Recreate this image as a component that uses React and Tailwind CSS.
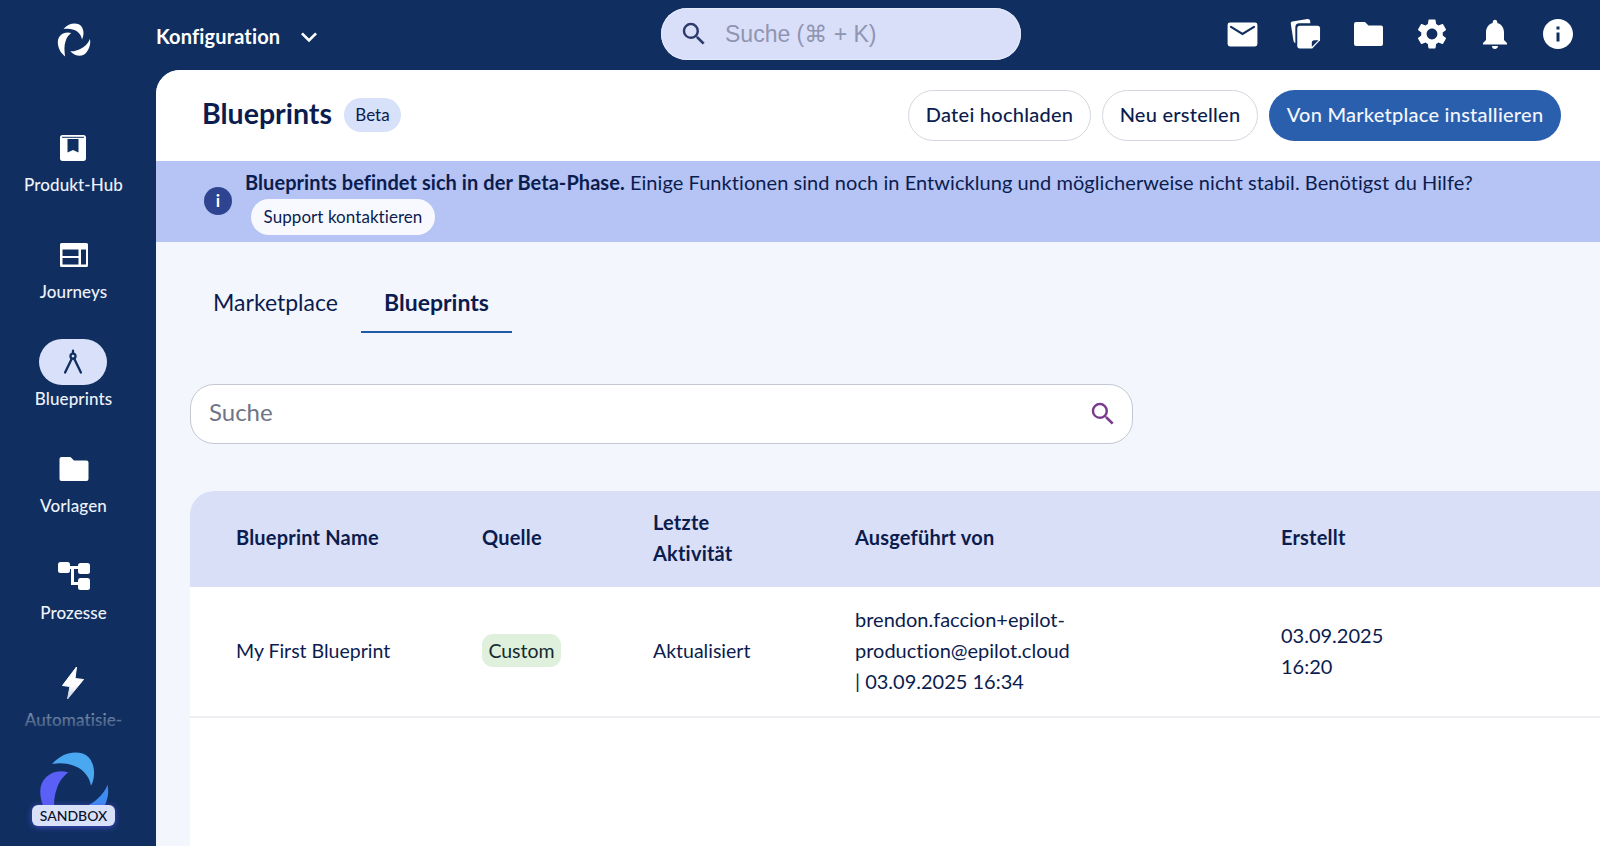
import React from "react";
import { MdSettings, MdNotifications, MdInfo, MdSearch, MdKeyboardArrowDown } from "react-icons/md";

const Crescents = ({ fills, className }) => (
  <svg viewBox="-20 -20 40 40" className={className}>
    <path fill={fills[0]} d="M-8.8,-11.2 C-4.5,-16 1,-17.5 5.5,-16 C11,-14 12,-6 9.3,-1 C8.500,-6 5,-9.300 1,-10.500 C-2,-11.500 -5,-11.800 -8.8,-11.2Z" />
    <path fill={fills[1]} d="M-1.2,-7.2 C-8.500,-9.500 -14,-4.500 -14.300,1 C-14.500,7 -11.500,12.500 -7.200,15.500 C-8,10.500 -8.300,5 -6.800,1 C-5.800,-2.500 -4,-5.300 -1.200,-7.200Z" />
    <path fill={fills[2]} d="M-2.200,10.500 C3,15.800 9.500,16.500 13.500,11.800 C16.500,8 18,3 17,-1.500 C15.500,2.500 12,6 8,8 C5,9.500 1.500,10.800 -2.200,10.500Z" />
  </svg>
);

const BookIcon = () => (
  <svg viewBox="0 0 28 28" className="w-[28px] h-[28px]" fill="white">
    <path fillRule="evenodd" d="M1 3.500C1 2 2 1 3.500 1h21C26 1 27 2 27 3.500V24.500C27 26 26 27 24.500 27h-21C2 27 1 26 1 24.500ZM8.500 5v13.500l5.500-2.600 5.500 2.600V5Z" />
    <rect x="3" y="2.800" width="22" height="1" fill="#102f60" />
  </svg>
);
const JourneyIcon = () => (
  <svg viewBox="0 0 30 26" className="w-[30px] h-[26px]" fill="white">
    <path fillRule="evenodd" d="M2.500 1h25A1.500 1.500 0 0 1 29 2.500v21a1.500 1.500 0 0 1-1.500 1.500h-25A1.500 1.500 0 0 1 1 23.500v-21A1.500 1.500 0 0 1 2.500 1ZM3.500 7.500v6.500h16V7.500Zm18.500 0v15h5v-15ZM3.500 16v6.500h16V16Z" />
  </svg>
);
const CompassIcon = () => (
  <svg viewBox="0 0 24 30" className="w-[20px] h-[26px]" fill="none" stroke="#102f60" strokeWidth="2.800" strokeLinecap="round">
    <circle cx="12" cy="8" r="3" />
    <path d="M12 1.500v2.500M10.500 11 2.500 27.500M13.500 11 21.500 27.500" />
  </svg>
);
const FolderIcon = ({ cls }) => (
  <svg viewBox="0 0 30 26" className={cls} fill="white">
    <path d="M2.500 1h9l3.500 3.500h12.500A2 2 0 0 1 29.500 6.500V23a2 2 0 0 1-2 2h-25a2 2 0 0 1-2-2V3a2 2 0 0 1 2-2Z" />
  </svg>
);
const ProcessIcon = () => (
  <svg viewBox="0 0 32 28" className="w-[32px] h-[28px]" fill="white">
    <rect x="0" y="0" width="12" height="11" rx="2.500" />
    <rect x="20" y="1" width="12" height="11" rx="2.500" />
    <rect x="20" y="16" width="12" height="12" rx="2.500" />
    <path d="M10 4h11v3h-5v13h5v3h-8V7h-3Z" />
  </svg>
);
const BoltIcon = () => (
  <svg viewBox="0 0 24 34" className="w-[24px] h-[34px]" fill="white">
    <path d="M15.500 1 1.500 19.500 9 20.500 6.500 33 22.500 13.500 14 12.500Z" stroke="white" strokeLinejoin="round" />
  </svg>
);
const MailIcon = () => (
  <svg viewBox="0 0 32 26" className="w-[31px] h-[25px] mt-[1px]">
    <rect x="0.500" y="0.500" width="31" height="25" rx="2.500" fill="white" />
    <path d="M4 5 16 12.500 28 5" fill="none" stroke="#102f60" strokeWidth="2.200" strokeLinecap="round" />
  </svg>
);
const CopyIcon = () => (
  <svg viewBox="0 0 32 32" className="w-[31px] h-[31px]">
    <path d="M2.500 3.500 18 1c1.500-.2 2.500.5 2.800 2L21 5.500H9.500C7 5.500 5.500 7 5.500 9.500V26C4.500 25.500 3.800 24.500 3.500 23L.8 6C.6 4.700 1.200 3.700 2.500 3.500Z" fill="white" />
    <path d="M10 8h18.500c1.500 0 2.500 1 2.500 2.500V23l-8 8.500H10c-1.500 0-2.500-1-2.500-2.500V10.500C7.500 9 8.500 8 10 8Z" fill="white" />
    <path d="M29.500 23h-4.500c-1.500 0-2.500 1-2.500 2.500v4.500Z" fill="#102f60" />
  </svg>
);

const navItems = [
  { label: "Produkt-Hub", icon: <BookIcon /> },
  { label: "Journeys", icon: <JourneyIcon /> },
  { label: "Blueprints", icon: <CompassIcon />, active: true },
  { label: "Vorlagen", icon: <FolderIcon cls="w-[30px] h-[26px]" /> },
  { label: "Prozesse", icon: <ProcessIcon /> },
  { label: "Automatisie-", icon: <BoltIcon /> },
];

const NavItem = ({ label, icon, active }) => (
  <div className="h-[107px] shrink-0 flex flex-col items-center">
    <div className={`h-[46px] w-[68px] rounded-full flex items-center justify-center ${active ? "bg-[#d9e1fa]" : ""}`}>{icon}</div>
    <div className="mt-[2px] text-[17px] leading-[24px] font-medium tracking-[0.1px] text-[#eef2fb]">{label}</div>
  </div>
);

const Sidebar = () => (
  <aside className="relative w-[156px] shrink-0 h-full bg-[#102f60] overflow-hidden flex flex-col items-center pr-[9px]">
    <div className="h-[125px] shrink-0 w-full flex justify-center pt-[20px] pr-[2px]">
      <Crescents fills={["white", "white", "white"]} className="w-[41px] h-[41px]" />
    </div>
    {navItems.map((n) => <NavItem key={n.label} {...n} />)}
    <div className="absolute left-0 right-0 bottom-0 h-[160px] bg-gradient-to-b from-[#102f6000] via-[#102f60e8] via-30% to-[#102f60]" />
    <div className="absolute left-0 w-[147px] bottom-0 h-[96px] flex flex-col items-center">
      <Crescents fills={["#4aa8f0", "#5a5ff5", "#3f8cf0"]} className="w-[86px] h-[86px] -mt-[5px] -ml-[5px] shrink-0" />
      <div className="absolute top-[55px] h-[21px] w-[83px] rounded-[6px] bg-[#d9e1fa] shadow-[0_1px_6px_rgba(90,90,240,0.7)] flex items-center justify-center text-[14px] font-medium text-[#0a0f25]">SANDBOX</div>
    </div>
  </aside>
);

const TopBar = () => (
  <header className="h-[70px] shrink-0 flex items-center relative">
    <div className="flex items-center w-[505px] shrink-0">
      <span className="text-[20px] tracking-[0.15px] font-bold text-white mt-[1px]">Konfiguration</span>
      <MdKeyboardArrowDown className="text-white ml-[13px] w-[32px] h-[32px] mt-[3px]" />
    </div>
    <div className="w-[360px] h-[52px] rounded-full bg-[#d9dff8] shadow-[inset_0_0_0_1px_#e4e9fb] flex items-center pl-[18px] -mt-[2px] shrink-0">
      <MdSearch className="w-[30px] h-[30px] text-[#2c3a6c]" />
      <span className="ml-[16px] text-[23px] text-[#8f95b2] mt-[1px] [font-family:'Liberation_Sans','DejaVu_Sans',sans-serif]">Suche (⌘ + K)</span>
    </div>
    <div className="flex items-center ml-[206px] gap-[32px] -mt-[3px]">
      <MailIcon />
      <CopyIcon />
      <FolderIcon cls="w-[31px] h-[26px]" />
      <MdSettings className="w-[36px] h-[36px] text-white -mx-[2px]" />
      <MdNotifications className="w-[36px] h-[36px] text-white -ml-[3px] -mr-[2px]" />
      <MdInfo className="w-[36px] h-[36px] text-white -mx-[3px]" />
    </div>
  </header>
);

const PageHead = () => (
  <div className="h-[91px] shrink-0 bg-white flex items-center pl-[46px] pr-[39px]">
    <h1 className="text-[28.500px] font-bold leading-[36px] text-[#0b1c4e] -mt-[5px]">Blueprints</h1>
    <span className="ml-[12px] h-[34px] w-[57px] rounded-full bg-[#d7e1fa] flex items-center justify-center text-[17px] text-[#0b1c4e] -mt-[1px]">Beta</span>
    <div className="ml-auto flex items-center gap-[11px]">
      <button className="h-[51px] w-[183px] pb-[3px] rounded-full border border-[#d3d6df] bg-white text-[20px] tracking-[0.25px] font-medium text-[#0b1c4e]">Datei hochladen</button>
      <button className="h-[51px] w-[156px] pb-[3px] rounded-full border border-[#d3d6df] bg-white text-[20px] tracking-[0.25px] font-medium text-[#0b1c4e]">Neu erstellen</button>
      <button className="h-[51px] w-[292px] pb-[3px] rounded-full bg-[#2a5fae] text-[20px] tracking-[0.25px] font-medium text-[#f3f6fd]">Von Marketplace installieren</button>
    </div>
  </div>
);

const Banner = () => (
  <div className="h-[81px] shrink-0 bg-[#b5c3f5] flex items-center pl-[48px]">
    <div className="w-[28px] h-[28px] -mt-[2px] rounded-full bg-[#2f4490] flex items-center justify-center text-white text-[17px] font-bold leading-none">i</div>
    <div className="ml-[13px] text-[20px] tracking-[0.06px] leading-[24px] text-[#0b1c4e] mt-[1px]">
      <div className="mb-[5px]"><b className="font-bold">Blueprints befindet sich in der Beta-Phase.</b> Einige Funktionen sind noch in Entwicklung und möglicherweise nicht stabil. Benötigst du Hilfe?</div>
      <span className="inline-flex ml-[6px] h-[36px] w-[184px] rounded-full bg-[#f7f9fe] items-center justify-center text-[17px] text-[#0b1c4e]">Support kontaktieren</span>
    </div>
  </div>
);

const Tabs = () => (
  <div className="h-[91px] flex items-stretch pl-[34px] gap-0 shrink-0 pt-[27px]">
    <div className="w-[171px] flex items-center justify-center text-[23px] text-[#0b1c4e] pt-[3px]">Marketplace</div>
    <div className="w-[151px] flex items-center justify-center text-[23px] font-bold text-[#0b1c4e] border-b-[2.500px] border-[#1f5aa8] pt-[5px]">Blueprints</div>
  </div>
);

const SearchField = () => (
  <div className="ml-[34px] mt-[51px] w-[943px] h-[60px] rounded-[24px] border border-[#c4c8d2] bg-white flex items-center pl-[18px] pr-[14px] shrink-0">
    <span className="text-[24px] text-[#6f7487] -mt-[5px]">Suche</span>
    <MdSearch className="ml-auto w-[30px] h-[30px] text-[#7a3a8e]" />
  </div>
);

const cols = "grid grid-cols-[246px_171px_202px_426px_1fr] pl-[46px]";

const Table = () => (
  <div className="ml-[34px] mt-[47px] flex-1 bg-white rounded-tl-[24px] overflow-hidden">
    <div className={`${cols} h-[96px] pb-[3px] bg-[#d9dff7] items-center text-[20px] tracking-[0.2px] font-bold leading-[31px] text-[#0b1c4e]`}>
      <div>Blueprint Name</div>
      <div>Quelle</div>
      <div>Letzte<br />Aktivität</div>
      <div>Ausgeführt von</div>
      <div>Erstellt</div>
    </div>
    <div className={`${cols} h-[131px] pb-[2px] border-b-2 border-[#eceef2] items-center text-[20px] leading-[31px] text-[#0b1c4e]`}>
      <div className="text-[19.500px]">My First Blueprint</div>
      <div><span className="inline-flex h-[33px] w-[79px] pb-[1px] items-center justify-center rounded-[11px] bg-[#dff0dc] text-[19.500px] text-[#142a30]">Custom</span></div>
      <div className="text-[19.500px]">Aktualisiert</div>
      <div>brendon.faccion+epilot-<br />production@epilot.cloud<br />| 03.09.2025 16:34</div>
      <div>03.09.2025<br />16:20</div>
    </div>
  </div>
);

export default function App() {
  return (
    <div className="w-[1600px] h-[846px] flex bg-[#102f60] overflow-hidden [font-family:Lato,sans-serif] [font-variant-ligatures:none]">
      <Sidebar />
      <div className="flex-1 min-w-0 flex flex-col">
        <TopBar />
        <main className="flex-1 min-h-0 flex flex-col rounded-tl-[24px] overflow-hidden bg-[#f4f6fe]">
          <PageHead />
          <Banner />
          <Tabs />
          <SearchField />
          <Table />
        </main>
      </div>
    </div>
  );
}
